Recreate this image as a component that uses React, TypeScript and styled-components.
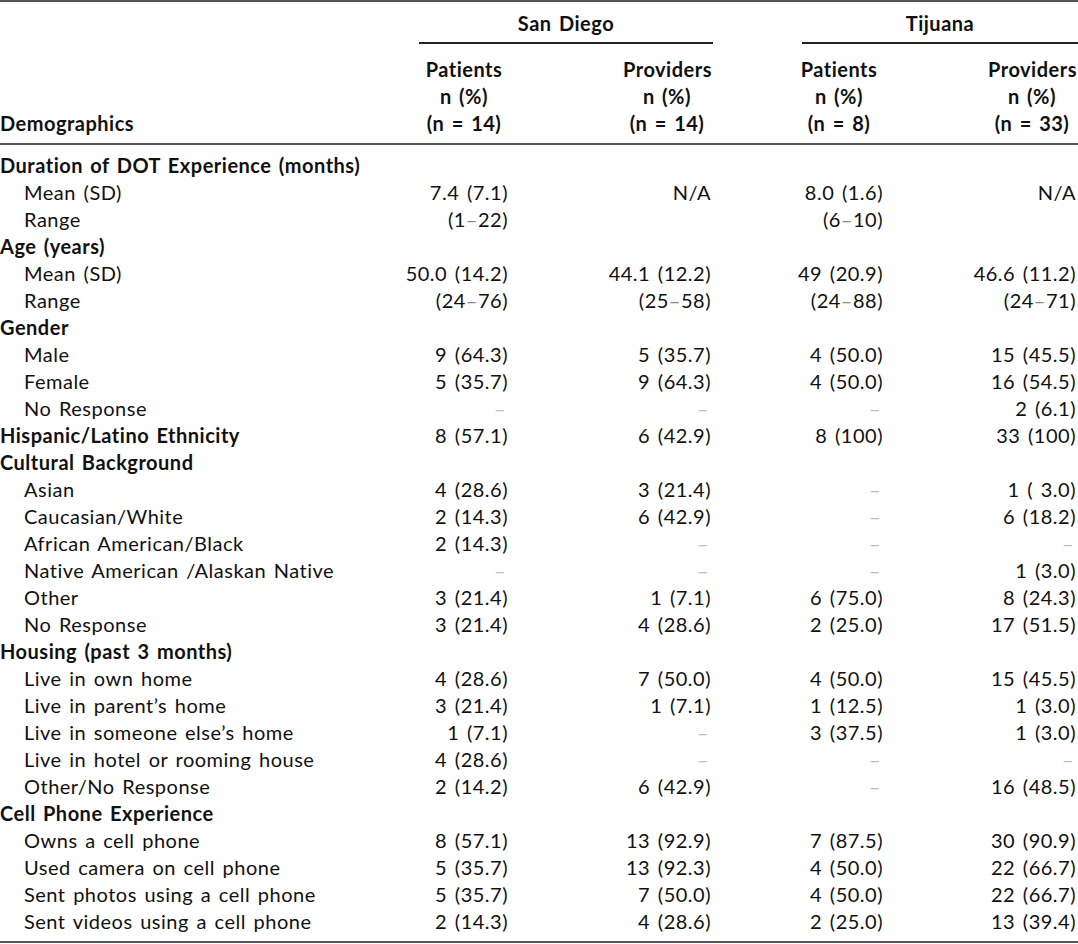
import React from "react";
import styled, { createGlobalStyle } from "styled-components";

const GlobalStyle = createGlobalStyle`
  html, body {
    margin: 0;
    padding: 0;
    background: #fff;
  }
  body {
    font-family: Lato, "Open Sans", "Liberation Sans", sans-serif;
    color: #111;
  }
`;

const COLS = "419px 91px 203px 89px 83px 193px";

const Table = styled.div`
  width: 1078px;
  border-top: 2px solid #555;
  border-bottom: 2px solid #555;
  font-size: 20px;
  letter-spacing: 0.5px;
  word-spacing: 2px;
  font-variant-numeric: tabular-nums;
`;

const GroupRow = styled.div`
  display: grid;
  grid-template-columns: ${COLS};
  height: 42px;
`;

const GroupCell = styled.div<{ $span: string }>`
  grid-column: ${(p) => p.$span};
  display: flex;
  align-items: center;
  justify-content: center;
  font-weight: 700;
  border-bottom: 2px solid #222;
  height: 42px;
  box-sizing: border-box;
  padding-top: 2px;
`;

const SubHead = styled.div`
  display: grid;
  grid-template-columns: ${COLS};
  padding: 12px 0 6px;
  border-bottom: 2px solid #555;
  font-weight: 700;
  line-height: 27px;
`;

const HeadLabel = styled.div`
  grid-column: 1;
  align-self: end;
`;

const HeadCol = styled.div<{ $col: number }>`
  grid-column: ${(p) => p.$col};
  display: flex;
  flex-direction: column;
  align-items: flex-end;
  padding-right: 2px;
`;

const HeadLine = styled.span`
  width: 88px;
  text-align: center;
  white-space: nowrap;
`;

const Body = styled.div`
  padding: 7px 0 6px;
`;

const Row = styled.div`
  display: grid;
  grid-template-columns: ${COLS};
  height: 27px;
  line-height: 27px;
`;

const Label = styled.div<{ $bold?: boolean }>`
  grid-column: 1;
  white-space: nowrap;
  font-weight: ${(p) => (p.$bold ? 700 : 400)};
  padding-left: ${(p) => (p.$bold ? "0" : "24px")};
`;

const Val = styled.div<{ $col: number }>`
  grid-column: ${(p) => p.$col};
  display: flex;
  justify-content: flex-end;
  white-space: nowrap;
  padding-right: 2px;
`;

const Dash = styled.span`
  color: #bdbdbd;
  padding-right: 2px;
`;

const RangeDash = styled.span`
  color: #8a8a8a;
`;

type Cell = string | null;
type Line = { label: string; bold?: boolean; vals?: Cell[] };

const D = "-";

const rows: Line[] = [
  { label: "Duration of DOT Experience (months)", bold: true },
  { label: "Mean (SD)", vals: ["7.4 (7.1)", "N/A", "8.0 (1.6)", "N/A"] },
  { label: "Range", vals: ["(1–22)", null, "(6–10)", null] },
  { label: "Age (years)", bold: true },
  { label: "Mean (SD)", vals: ["50.0 (14.2)", "44.1 (12.2)", "49 (20.9)", "46.6 (11.2)"] },
  { label: "Range", vals: ["(24–76)", "(25–58)", "(24–88)", "(24–71)"] },
  { label: "Gender", bold: true },
  { label: "Male", vals: ["9 (64.3)", "5 (35.7)", "4 (50.0)", "15 (45.5)"] },
  { label: "Female", vals: ["5 (35.7)", "9 (64.3)", "4 (50.0)", "16 (54.5)"] },
  { label: "No Response", vals: [D, D, D, "2 (6.1)"] },
  { label: "Hispanic/Latino Ethnicity", bold: true, vals: ["8 (57.1)", "6 (42.9)", "8 (100)", "33 (100)"] },
  { label: "Cultural Background", bold: true },
  { label: "Asian", vals: ["4 (28.6)", "3 (21.4)", D, "1 ( 3.0)"] },
  { label: "Caucasian/White", vals: ["2 (14.3)", "6 (42.9)", D, "6 (18.2)"] },
  { label: "African American/Black", vals: ["2 (14.3)", D, D, D] },
  { label: "Native American /Alaskan Native", vals: [D, D, D, "1 (3.0)"] },
  { label: "Other", vals: ["3 (21.4)", "1 (7.1)", "6 (75.0)", "8 (24.3)"] },
  { label: "No Response", vals: ["3 (21.4)", "4 (28.6)", "2 (25.0)", "17 (51.5)"] },
  { label: "Housing (past 3 months)", bold: true },
  { label: "Live in own home", vals: ["4 (28.6)", "7 (50.0)", "4 (50.0)", "15 (45.5)"] },
  { label: "Live in parent’s home", vals: ["3 (21.4)", "1 (7.1)", "1 (12.5)", "1 (3.0)"] },
  { label: "Live in someone else’s home", vals: ["1 (7.1)", D, "3 (37.5)", "1 (3.0)"] },
  { label: "Live in hotel or rooming house", vals: ["4 (28.6)", D, D, D] },
  { label: "Other/No Response", vals: ["2 (14.2)", "6 (42.9)", D, "16 (48.5)"] },
  { label: "Cell Phone Experience", bold: true },
  { label: "Owns a cell phone", vals: ["8 (57.1)", "13 (92.9)", "7 (87.5)", "30 (90.9)"] },
  { label: "Used camera on cell phone", vals: ["5 (35.7)", "13 (92.3)", "4 (50.0)", "22 (66.7)"] },
  { label: "Sent photos using a cell phone", vals: ["5 (35.7)", "7 (50.0)", "4 (50.0)", "22 (66.7)"] },
  { label: "Sent videos using a cell phone", vals: ["2 (14.3)", "4 (28.6)", "2 (25.0)", "13 (39.4)"] },
];

const colFor = [2, 3, 5, 6];

const renderVal = (v: Cell) => {
  if (v === null) return null;
  if (v === D) return <Dash>–</Dash>;
  if (v.includes("–")) {
    const [a, b] = v.split("–");
    return (
      <span>
        {a}
        <RangeDash>–</RangeDash>
        {b}
      </span>
    );
  }
  return <span>{v}</span>;
};

const heads = [
  { col: 2, title: "Patients", n: "14" },
  { col: 3, title: "Providers", n: "14" },
  { col: 5, title: "Patients", n: "8" },
  { col: 6, title: "Providers", n: "33" },
];

export default function App() {
  return (
    <>
      <GlobalStyle />
      <Table>
        <GroupRow>
          <GroupCell $span="2 / 4">San Diego</GroupCell>
          <GroupCell $span="5 / 7">Tijuana</GroupCell>
        </GroupRow>
        <SubHead>
          <HeadLabel>Demographics</HeadLabel>
          {heads.map((h) => (
            <HeadCol key={h.col} $col={h.col}>
              <HeadLine>{h.title}</HeadLine>
              <HeadLine>n (%)</HeadLine>
              <HeadLine>(n = {h.n})</HeadLine>
            </HeadCol>
          ))}
        </SubHead>
        <Body>
          {rows.map((r, i) => (
            <Row key={i}>
              <Label $bold={r.bold}>{r.label}</Label>
              {r.vals?.map((v, j) => (
                <Val key={j} $col={colFor[j]}>
                  {renderVal(v)}
                </Val>
              ))}
            </Row>
          ))}
        </Body>
      </Table>
    </>
  );
}
